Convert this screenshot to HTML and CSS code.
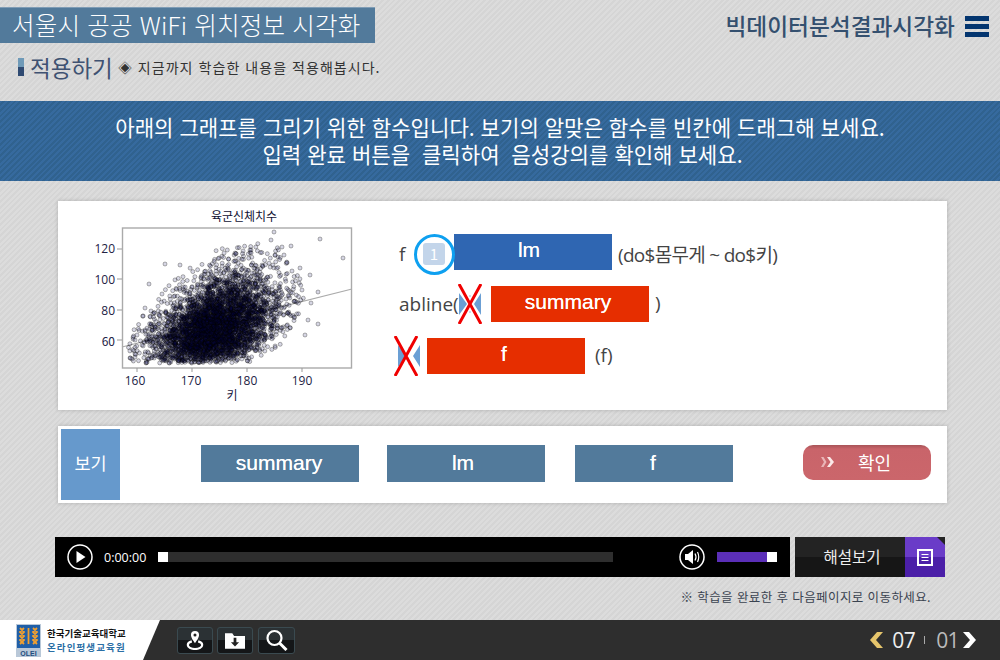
FILE: index.html
```html
<!DOCTYPE html>
<html lang="ko">
<head>
    <meta charset="utf-8">
    <title>서울시 공공 WiFi 위치정보 시각화</title>
    <link rel="stylesheet" href="styles.css">
</head>
<body>
    <div class="page">
        <header class="top">
            <h1 class="lesson-title">서울시 공공 WiFi 위치정보 시각화</h1>
            <div class="course">
                <span class="course-name">빅데이터분석결과시각화</span>
                <span class="menu-icon"><i></i><i></i><i></i></span>
            </div>
        </header>

        <div class="section-head">
            <span class="section-mark"></span>
            <h2 class="section-title">적용하기</h2>
            <p class="section-desc">◈ 지금까지 학습한 내용을 적용해봅시다.</p>
        </div>

        <div class="banner">
            <p>아래의 그래프를 그리기 위한 함수입니다. 보기의 알맞은 함수를 빈칸에 드래그해 보세요.</p>
            <p class="banner-second">입력 완료 버튼을&nbsp; 클릭하여&nbsp; 음성강의를 확인해 보세요.</p>
        </div>

        <section class="card quiz">
            <svg class="plot" viewBox="60 201 310 209" width="310" height="209">
                <text class="plot-title" x="244" y="221" text-anchor="middle">육군신체치수</text>
                <rect x="122.5" y="228" width="229" height="140" fill="#fff"/>
                <line x1="122" y1="347" x2="352" y2="289" stroke="#aaa" stroke-width="1.2"/>
                <g id="dots" class="dots"></g>
                <rect x="122.5" y="228" width="229" height="140" fill="none" stroke="#aaa" stroke-width="1.4"/>
                <g stroke="#999" stroke-width="1">
                    <line x1="117" y1="249" x2="122" y2="249"/>
                    <line x1="117" y1="279" x2="122" y2="279"/>
                    <line x1="117" y1="310" x2="122" y2="310"/>
                    <line x1="117" y1="340" x2="122" y2="340"/>
                    <line x1="137" y1="368" x2="137" y2="372"/>
                    <line x1="192" y1="368" x2="192" y2="372"/>
                    <line x1="247" y1="368" x2="247" y2="372"/>
                    <line x1="302" y1="368" x2="302" y2="372"/>
                </g>
                <g class="plot-label" text-anchor="end">
                    <text x="115" y="253">120</text>
                    <text x="115" y="284">100</text>
                    <text x="115" y="315">80</text>
                    <text x="115" y="346">60</text>
                </g>
                <g class="plot-label" text-anchor="middle">
                    <text x="135" y="385">160</text>
                    <text x="191" y="385">170</text>
                    <text x="247" y="385">180</text>
                    <text x="302" y="385">190</text>
                    <text x="232" y="400">키</text>
                </g>
            </svg>

            <div class="formulas">
                <div class="formula-row">
                    <span class="code code-f">f</span>
                    <span class="blank-marker">
                        <span class="blank-num">1</span>
                    </span>
                    <span class="answer answer-ok answer-lm">lm</span>
                    <span class="code code-args">(do$몸무게 ~ do$키)</span>
                </div>
                <div class="formula-row">
                    <span class="code code-abline">abline(</span>
                    <span class="drop">
                        <svg class="drop-shape" viewBox="0 0 22 22" width="22" height="22"><path d="M0 0l8 11-8 11zM22 0l-7 11 7 11z" fill="#6b9fd4"/><path d="M11 2v2M11 18v2" stroke="#9dbde0" stroke-width="1"/></svg>
                        <svg class="wrong" viewBox="0 0 24 40" width="24" height="40"><path d="M1 0l22 40M23 0L1 40" stroke="#f00000" stroke-width="3" fill="none"/></svg>
                    </span>
                    <span class="answer answer-bad">summary</span>
                    <span class="code code-close">)</span>
                </div>
                <div class="formula-row row-last">
                    <span class="drop drop-shifted">
                        <svg class="drop-shape" viewBox="0 0 22 22" width="22" height="22"><path d="M0 0l8 11-8 11zM22 0l-7 11 7 11z" fill="#6b9fd4"/><path d="M11 2v2M11 18v2" stroke="#9dbde0" stroke-width="1"/></svg>
                        <svg class="wrong" viewBox="0 0 24 40" width="24" height="40"><path d="M1 0l22 40M23 0L1 40" stroke="#f00000" stroke-width="3" fill="none"/></svg>
                    </span>
                    <span class="answer answer-bad">f</span>
                    <span class="code code-call">(f)</span>
                </div>
            </div>
        </section>

        <section class="card choices">
            <div class="choices-label">보기</div>
            <div class="choice-list">
                <span class="choice">summary</span>
                <span class="choice choice-lm">lm</span>
                <span class="choice choice-f">f</span>
            </div>
            <button class="confirm">
                <svg viewBox="0 0 13 10" width="13" height="10"><path d="M0 0h2.500l3 5-3 5H0l3-5z" fill="#e9b4b6"/><path d="M6 0h3l4 5-4 5H6l3.500-5z" fill="#fbe9e9"/></svg>
                <span>확인</span>
            </button>
        </section>

        <div class="media">
            <div class="player">
                <svg class="round-btn" viewBox="0 0 26 26" width="26" height="26">
                    <circle cx="13" cy="13" r="12" fill="none" stroke="#fff" stroke-width="1.500"/>
                    <path d="M9.500 7l9 6-9 6z" fill="#fff"/>
                </svg>
                <span class="time">0:00:00</span>
                <div class="track"><span class="knob"></span></div>
                <svg class="round-btn" viewBox="0 0 26 26" width="26" height="26">
                    <circle cx="13" cy="13" r="12" fill="none" stroke="#fff" stroke-width="1.500"/>
                    <path d="M6 10h3l5-4v14l-5-4H6z" fill="#fff"/>
                    <path d="M16 9.500q2 3.500 0 7M18.500 8q2.500 5 0 10" fill="none" stroke="#fff" stroke-width="1.200"/>
                </svg>
                <div class="volume"><span class="volume-knob"></span></div>
            </div>
            <button class="script-btn">
                <span class="script-label">해설보기</span>
                <span class="script-icon">
                    <svg viewBox="0 0 16 17" width="16" height="17">
                        <rect x="1" y="1" width="14" height="15" fill="none" stroke="#fff" stroke-width="2"/>
                        <path d="M4.500 5.500h7M4.500 8.500h7M4.500 11.500h7" stroke="#fff" stroke-width="1.200"/>
                    </svg>
                </span>
            </button>
        </div>

        <p class="note">※ 학습을 완료한 후 다음페이지로 이동하세요.</p>

        <footer class="bottom">
            <div class="brand">
                <svg class="logo" viewBox="0 0 25 33" width="25" height="33">
                    <rect width="25" height="33" fill="#b9c8d8"/>
                    <rect x="1" y="1" width="23" height="23" fill="#1f5fa8"/>
                    <path d="M4 4l4 4-4 4 4 4-4 4M8 4L4 8l4 4-4 4 4 4M12.500 4v16M17 4l4 4-4 4 4 4-4 4M21 4l-4 4 4 4-4 4 4 4" fill="none" stroke="#f0a030" stroke-width="1.800"/>
                    <text class="logo-text" x="12.500" y="31.500" text-anchor="middle">OLEI</text>
                </svg>
                <div class="brand-names">
                    <span class="brand-uni">한국기술교육대학교</span>
                    <span class="brand-dept">온라인평생교육원</span>
                </div>
            </div>
            <div class="tools">
                <button class="tool">
                    <svg viewBox="0 0 20 22" width="18" height="20">
                        <path d="M10 1a4.500 4.500 0 0 1 4.500 4.500C14.500 9 10 14.500 10 14.500S5.500 9 5.500 5.500A4.500 4.500 0 0 1 10 1z" fill="#fff"/>
                        <circle cx="10" cy="5.500" r="1.700" fill="#222"/>
                        <path d="M6.500 12.500c-3 .8-4.500 2.500-4.500 4 0 2.500 3.500 4.500 8 4.500s8-2 8-4.500c0-1.500-1.500-3.200-4.500-4" fill="none" stroke="#fff" stroke-width="2.400"/>
                    </svg>
                </button>
                <button class="tool">
                    <svg viewBox="0 0 22 18" width="20" height="17">
                        <path d="M0 1h8l2 3h12v14H0z" fill="#fff"/>
                        <path d="M9.500 6h3v5h3l-4.500 4.500L6.500 11h3z" fill="#222"/>
                    </svg>
                </button>
                <button class="tool tool-wide">
                    <svg viewBox="0 0 24 22" width="24" height="22">
                        <circle cx="9.500" cy="9" r="7" fill="none" stroke="#fff" stroke-width="2.200"/>
                        <path d="M14.500 14l7 7" stroke="#fff" stroke-width="3"/>
                    </svg>
                </button>
            </div>
            <div class="pager">
                <svg viewBox="0 0 15 16" width="15" height="16"><path d="M8 0h6L7 8l7 8H8L1 8z" fill="#e6c56c"/></svg>
                <span class="page-now">07</span>
                <span class="page-sep"></span>
                <span class="page-total">01</span>
                <svg viewBox="0 0 15 16" width="15" height="16"><path d="M7 0H1l7 8-7 8h6l7-8z" fill="#fff"/></svg>
            </div>
        </footer>
    </div>

    <script src="script.js"></script>
</body>
</html>
```

FILE: styles.css
```css
*, *::before, *::after {
    box-sizing: border-box;
}

html, body {
    margin: 0;
    padding: 0;
}

body {
    font-family: "Noto Sans CJK KR", "Open Sans", sans-serif;
}

p, h1, h2 {
    margin: 0;
    font-weight: 400;
}

button {
    border: none;
    padding: 0;
    font: inherit;
}

.page {
    width: 1000px;
    height: 660px;
    overflow: hidden;
    display: flex;
    flex-direction: column;
    background: repeating-linear-gradient(135deg, #dcdcdc 0, #dcdcdc 2px, #d5d5d5 2px, #d5d5d5 4px);
}

/* header */
.top {
    display: flex;
    justify-content: space-between;
    align-items: flex-start;
    padding: 7px 11px 0 0;
    height: 43px;
}

.lesson-title {
    width: 375px;
    height: 36px;
    padding-left: 12px;
    background: #527a9b;
    border-top: 1px solid #7f9cb5;
    color: #fff;
    font-size: 24.500px;
    font-weight: 300;
    line-height: 34px;
    letter-spacing: .2px;
    white-space: nowrap;
}

.course {
    display: flex;
    align-items: center;
    gap: 10px;
    height: 38px;
}

.course-name {
    color: #34506f;
    font-size: 22.700px;
    font-weight: 500;
    line-height: 38px;
}

.menu-icon {
    display: flex;
    flex-direction: column;
    gap: 3px;
    width: 24px;
}

.menu-icon i {
    display: block;
    height: 5px;
    background: #03356f;
}

.section-head {
    display: flex;
    align-items: center;
    height: 36px;
    padding: 12px 0 0 18px;
}

.section-mark {
    width: 6px;
    height: 18px;
    margin-right: 6px;
    background: linear-gradient(#6f9ab8 50%, #2f4a72 50%);
}

.section-title {
    color: #3f5272;
    font-size: 22.500px;
    line-height: 28px;
}

.section-desc {
    margin-left: 5px;
    color: #333;
    font-size: 14px;
    line-height: 28px;
    letter-spacing: 1.050px;
}

.banner {
    height: 80px;
    margin-top: 22px;
    padding-top: 13px;
    background: repeating-linear-gradient(135deg, #366a9e 0, #366a9e 2px, #30628f 2px, #30628f 4px);
    color: #fff;
    font-size: 21.100px;
    line-height: 27px;
    text-align: center;
}

.banner-second {
    padding-left: 5px;
}

/* cards */
.card {
    width: 889px;
    margin-left: 58px;
    background: #fff;
    box-shadow: 0 0 4px rgba(0, 0, 0, .2);
}

.quiz {
    display: flex;
    height: 209px;
    margin-top: 20px;
    padding-left: 2px;
}

.plot {
    display: block;
    flex: none;
}

.plot-title {
    fill: #111133;
    font-size: 12px;
}

.plot-label text {
    fill: #222244;
    font-family: "Open Sans", sans-serif;
    font-size: 12px;
}

.plot-label text:last-child {
    font-family: "Noto Sans CJK KR", sans-serif;
}

.dots {
    filter: blur(.3px);
}

.formulas {
    display: flex;
    flex-direction: column;
    gap: 16px;
    margin-left: 29px;
    padding-top: 33px;
}

.formula-row {
    display: flex;
    align-items: center;
    height: 36px;
}

.row-last {
    margin-left: -5px;
}

.code {
    color: #444;
    font-family: "Open Sans", "Noto Sans CJK KR", sans-serif;
    font-size: 19px;
    white-space: nowrap;
}

.code-f {
    width: 15px;
    padding-top: 3px;
}

.code-abline {
    width: 59px;
}

.code-args {
    margin-left: 6px;
    padding-top: 3px;
    letter-spacing: -.7px;
}

.code-close {
    margin-left: 6px;
    padding-bottom: 2px;
}

.code-call {
    margin-left: 10px;
    padding-bottom: 3px;
}

.answer {
    flex: none;
    width: 158px;
    height: 36px;
    padding-right: 4px;
    color: #fff;
    font-family: "Liberation Sans", sans-serif;
    font-size: 21px;
    line-height: 32px;
    text-align: center;
    text-shadow: 0 0 .3px #fff;
}

.answer-ok {
    background: #2f66b2;
    margin-left: 2px;
}

.answer-lm {
    padding-right: 8px;
}

.answer-bad {
    background: #e62e00;
}

.blank-marker {
    position: relative;
    z-index: 1;
    flex: none;
    width: 38px;
    height: 36px;
}

.blank-marker::after {
    content: "";
    position: absolute;
    left: 0;
    top: 0;
    width: 41px;
    height: 41px;
    border: 3.500px solid #0ea0f0;
    border-radius: 50%;
}

.blank-num {
    position: absolute;
    left: 9px;
    top: 9px;
    width: 22px;
    height: 22px;
    background: #c3d5ea;
    border-radius: 3px;
    color: #fff;
    font-size: 15px;
    line-height: 22px;
    text-align: center;
}

.drop {
    position: relative;
    flex: none;
    width: 33px;
    height: 36px;
    padding-left: 1px;
    display: flex;
    align-items: center;
}

.drop-shifted {
    padding-left: 4px;
}

.drop-shape {
    display: block;
}

.wrong {
    position: absolute;
    left: 0;
    top: -2px;
}

.choices {
    display: flex;
    align-items: flex-start;
    height: 77px;
    margin-top: 16px;
    padding: 3px;
}

.choices-label {
    width: 59px;
    height: 71px;
    background: #6699cc;
    color: #fff;
    font-size: 17.500px;
    line-height: 68px;
    text-align: center;
}

.choice-list {
    display: flex;
    gap: 28px;
    margin: 16px 0 0 81px;
}

.choice {
    width: 158px;
    height: 37px;
    padding-right: 2px;
    background: #527a9b;
    color: #fff;
    font-family: "Liberation Sans", sans-serif;
    font-size: 21px;
    line-height: 35px;
    text-align: center;
    text-shadow: 0 0 .3px #fff;
}

.choice-lm {
    padding-right: 6px;
}

.choice-f {
    margin-left: 2px;
}

.confirm {
    display: flex;
    align-items: center;
    width: 128px;
    height: 35px;
    margin: 16px 0 0 70px;
    padding: 0 0 2px 18px;
    background: linear-gradient(#a85458 0, #c9646a 4px, #cb666b 100%);
    border-radius: 10px;
    color: #fff;
    font-size: 18px;
}

.confirm span {
    margin-left: 24px;
}

/* player */
.media {
    display: flex;
    gap: 5px;
    margin: 34px 0 0 55px;
}

.player {
    display: flex;
    align-items: center;
    width: 735px;
    height: 40px;
    padding-left: 12px;
    background: #000;
}

.round-btn {
    flex: none;
}

.time {
    width: 54px;
    margin-left: 11px;
    color: #fff;
    font-family: "Open Sans", sans-serif;
    font-size: 12.500px;
}

.track {
    width: 455px;
    height: 10px;
    margin-right: 66px;
    background: #2e2e2e;
}

.knob {
    display: block;
    width: 10px;
    height: 10px;
    background: #fff;
}

.volume {
    display: flex;
    justify-content: flex-end;
    width: 60px;
    height: 10px;
    margin-left: 12px;
    background: #5b2fb8;
}

.volume-knob {
    width: 10px;
    height: 10px;
    background: #fff;
}

.script-btn {
    display: flex;
    width: 150px;
    height: 40px;
    background: linear-gradient(#232323 50%, #161616 50%);
    color: #eee;
}

.script-label {
    width: 110px;
    padding-left: 4px;
    font-size: 15.500px;
    line-height: 38px;
    text-align: center;
}

.script-icon {
    display: flex;
    align-items: center;
    justify-content: center;
    width: 40px;
    height: 40px;
    background: linear-gradient(#6a3cc8 50%, #4b1fa8 50%);
    clip-path: polygon(0 0, 32px 0, 40px 8px, 40px 40px, 0 40px);
}

.note {
    height: 43px;
    padding: 10px 69px 0 0;
    color: #3a4350;
    font-size: 12.500px;
    line-height: 20px;
    text-align: right;
    letter-spacing: .4px;
}

/* footer */
.bottom {
    display: flex;
    align-items: center;
    height: 40px;
    background: #2e2e2e;
}

.brand {
    display: flex;
    align-items: center;
    gap: 6px;
    width: 160px;
    height: 40px;
    padding-left: 16px;
    background: #fff;
    clip-path: polygon(0 0, 160px 0, 143px 40px, 0 40px);
}

.logo {
    flex: none;
}

.logo-text {
    fill: #1f4f80;
    font-family: "Liberation Sans", sans-serif;
    font-size: 7px;
    font-weight: 700;
}

.brand-names {
    display: flex;
    flex-direction: column;
    line-height: 14px;
    white-space: nowrap;
}

.brand-uni {
    color: #111;
    font-size: 9.500px;
    font-weight: 700;
}

.brand-dept {
    color: #2a6ea5;
    font-size: 9.500px;
    font-weight: 700;
    letter-spacing: 1.100px;
}

.tools {
    display: flex;
    gap: 4px;
    margin-left: 17px;
}

.tool {
    display: flex;
    align-items: center;
    justify-content: center;
    width: 36px;
    height: 27px;
    border: 1px solid #3a4a50;
    border-radius: 3px;
    background: linear-gradient(#2b3134 50%, #141618 50%);
}

.tool-wide {
    width: 37px;
    margin-left: 1px;
}

.pager {
    display: flex;
    align-items: center;
    margin-left: auto;
    padding-right: 23px;
    font-family: "Open Sans", sans-serif;
    font-size: 21px;
    letter-spacing: -.6px;
}

.page-now {
    margin-left: 8px;
    color: #eee;
}

.page-sep {
    width: 1px;
    height: 8px;
    margin: 0 11px 0 9px;
    background: #aaa;
}

.page-total {
    margin-right: 3px;
    color: #bbb;
}
```

FILE: script.js
```js
// scatter plot points, drawn in page pixels
const dots = document.getElementById('dots');
const NS = 'http://www.w3.org/2000/svg';

let seed = 20714;
function rand() {
    seed = (seed * 1664525 + 1013904223) % 4294967296;
    return seed / 4294967296;
}

function gauss() {
    return Math.sqrt(-2 * Math.log(rand() + 1e-9)) * Math.cos(2 * Math.PI * rand());
}

function addDot(x, y) {
    const c = document.createElementNS(NS, 'circle');
    c.setAttribute('cx', x.toFixed(1));
    c.setAttribute('cy', y.toFixed(1));
    c.setAttribute('r', '2');
    c.setAttribute('fill', 'rgba(0,0,90,.16)');
    c.setAttribute('stroke', 'rgba(0,0,0,.38)');
    c.setAttribute('stroke-width', '.8');
    dots.appendChild(c);
}

for (let i = 0; i < 4600; i++) {
    const a = gauss();
    const b = gauss();
    // keep the cloud an ellipse, without hard edges
    if (a * a + b * b > 8) continue;
    const x = 216 + 31 * a;
    const up = 24 * (0.4 * a + 0.9 * b);
    const y = 326 - up - 0.004 * up * up;
    if (y < 363) {
        addDot(x, y);
    }
}

// the far away points
[[343, 258], [320, 239], [274, 232], [271, 240], [130, 358], [149, 284], [318, 292],
 [318, 324], [311, 303], [302, 290], [291, 246], [282, 247], [284, 255], [137, 335],
 [145, 308], [142, 345], [149, 359], [162, 294], [308, 320], [305, 335], [135, 340],
 [145, 330], [152, 330], [310, 275], [300, 268], [250, 250], [165, 264], [180, 265]].forEach(p => addDot(p[0], p[1]));
```
